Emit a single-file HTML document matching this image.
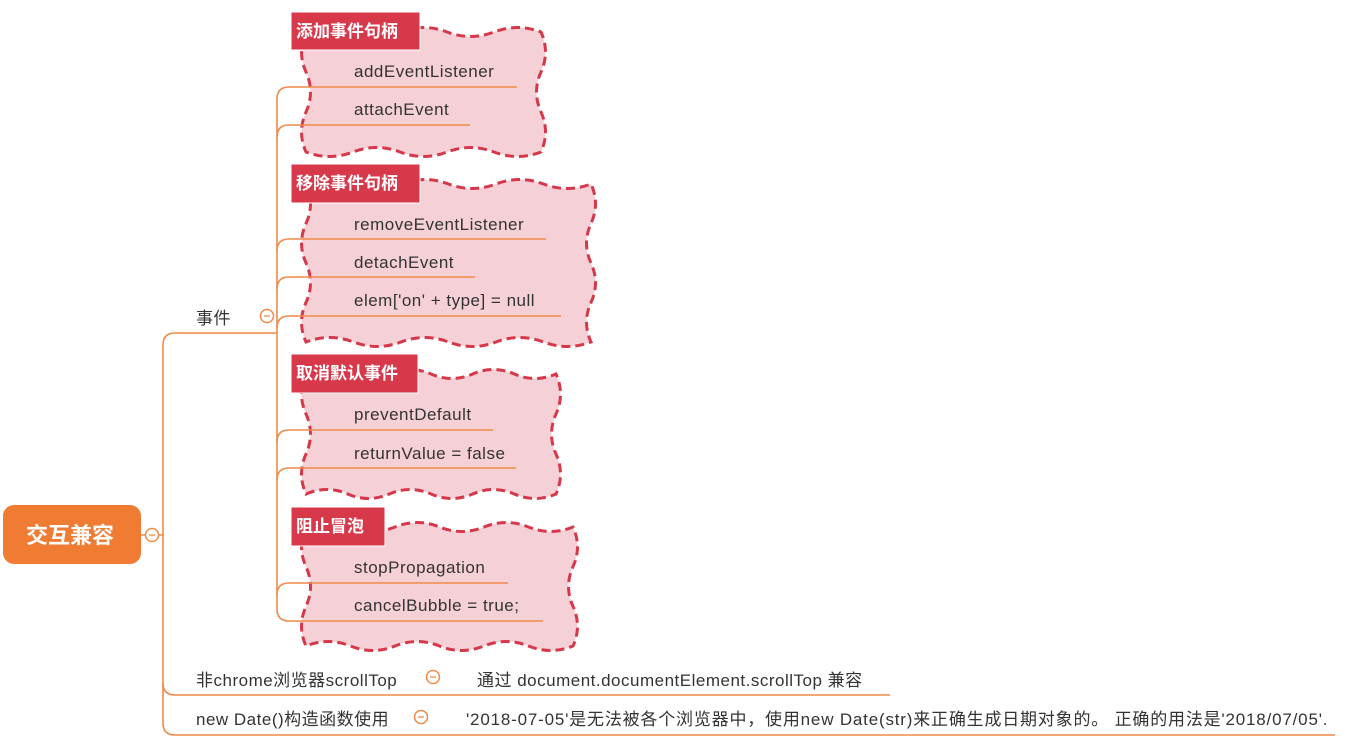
<!DOCTYPE html>
<html><head><meta charset="utf-8"><style>
body{margin:0;background:#fff;width:1369px;height:742px;overflow:hidden}
svg{display:block}
text{font-family:"Liberation Sans","Noto Sans CJK SC",sans-serif}
</style></head><body>
<svg id="s" width="1369" height="742" xmlns="http://www.w3.org/2000/svg">
<g id="clouds"></g>
<g stroke="#ef8a4a" stroke-width="1.6" fill="none">
<path d="M141 535 H163"/>
<path d="M163 345 Q163 333 175 333 H277"/>
<path d="M163 345 V723 Q163 735 175 735 H1335"/>
<path d="M163 683 Q163 695 175 695 H890"/>
<path d="M277 99 V609 Q277 621 289 621 H543"/>
<path d="M277 99 Q277 87 289 87 H517"/>
<path d="M277 137 Q277 125 289 125 H470"/>
<path d="M277 251 Q277 239 289 239 H546"/>
<path d="M277 289 Q277 277 289 277 H475"/>
<path d="M277 328 Q277 316 289 316 H561"/>
<path d="M277 442 Q277 430 289 430 H493"/>
<path d="M277 480 Q277 468 289 468 H516"/>
<path d="M277 595 Q277 583 289 583 H508"/>
</g>
<rect x="3" y="505" width="138" height="59" rx="11" fill="#f07b32"/>
<text x="70" y="543" fill="#fff" font-size="22" font-weight="bold" text-anchor="middle">交互兼容</text>
<g fill="#fff" stroke="#ef8a4a" stroke-width="1.5">
<circle cx="152" cy="535" r="6.5"/><circle cx="267" cy="316" r="6.5"/><circle cx="433" cy="677" r="6.5"/><circle cx="421" cy="717" r="6.5"/>
</g>
<g stroke="#ef8a4a" stroke-width="1.3"><path d="M149 535h6M264 316h6M430 677h6M418 717h6"/></g>
<g fill="#d8394a" stroke="#fff" stroke-width="1">
<rect x="291" y="12" width="129" height="38"/><rect x="291" y="164" width="129" height="39"/>
<rect x="291" y="354" width="127" height="39"/><rect x="291" y="507" width="94" height="39"/>
</g>
<g fill="#fff" font-size="17" font-weight="bold">
<text x="296" y="37">添加事件句柄</text><text x="296" y="189">移除事件句柄</text>
<text x="296" y="379">取消默认事件</text><text x="296" y="532">阻止冒泡</text>
</g>
<g fill="#333" font-size="17" letter-spacing="0.5">
<text x="354" y="77">addEventListener</text><text x="354" y="115">attachEvent</text>
<text x="354" y="230">removeEventListener</text><text x="354" y="268">detachEvent</text>
<text x="354" y="306">elem['on' + type] = null</text>
<text x="354" y="420">preventDefault</text><text x="354" y="459">returnValue = false</text>
<text x="354" y="573">stopPropagation</text><text x="354" y="611">cancelBubble = true;</text>
<text x="196" y="324">事件</text>
<text x="196" y="686">非chrome浏览器scrollTop</text>
<text x="477" y="686">通过 document.documentElement.scrollTop 兼容</text>
<text x="196" y="725">new Date()构造函数使用</text>
<text x="466" y="725" textLength="862">'2018-07-05'是无法被各个浏览器中，使用new Date(str)来正确生成日期对象的。 正确的用法是'2018/07/05'.</text>
</g>
</svg>
<script>
function wave(x1,y1,x2,y2,a){var n=Math.max(2,Math.round(Math.hypot(x2-x1,y2-y1)/45));var d='';var dx=(x2-x1)/n,dy=(y2-y1)/n,L=Math.hypot(dx,dy),nx=-dy/L,ny=dx/L;
for(var i=0;i<n;i++){var s=(i%2?1:-1)*a;var cx=x1+dx*(i+.5)+nx*s,cy=y1+dy*(i+.5)+ny*s;d+=' Q'+cx+' '+cy+' '+(x1+dx*(i+1))+' '+(y1+dy*(i+1));}return d;}
function cloud(x1,y1,x2,y2){var d='M'+x1+' '+y1+wave(x1,y1,x2,y1,9)+wave(x2,y1,x2,y2,9)+wave(x2,y2,x1,y2,9)+wave(x1,y2,x1,y1,9)+'Z';return '<path d="'+d+'" fill="#f5d0d7" stroke="#d6384a" stroke-width="3" stroke-dasharray="9 5"/>';}
document.getElementById('clouds').innerHTML=cloud(306,32,541,152)+cloud(306,184,591,342)+cloud(306,374,556,494)+cloud(306,527,573,646);
</script>
</body></html>
